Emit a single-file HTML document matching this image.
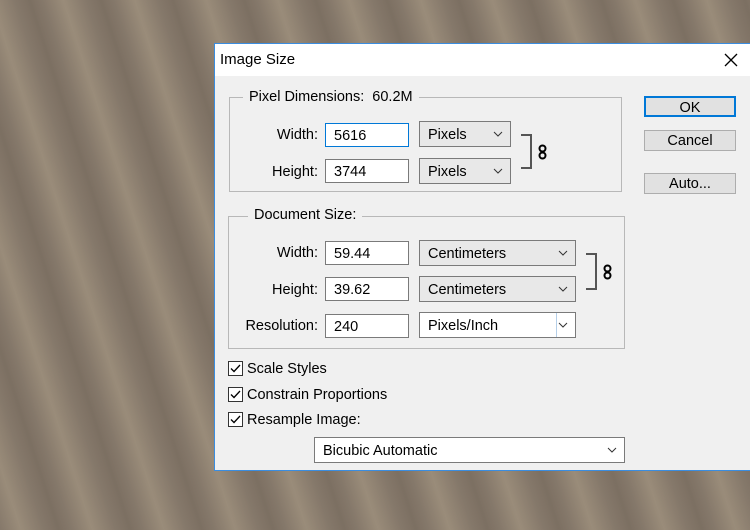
<!DOCTYPE html>
<html><head><style>
*{box-sizing:border-box;margin:0;padding:0}
body{width:750px;height:530px;overflow:hidden;position:relative;font-family:"Liberation Sans",sans-serif;font-size:14.5px;color:#000;
background:
repeating-linear-gradient(72deg,rgba(185,170,145,0) 0px,rgba(185,170,145,.4) 20px,rgba(185,170,145,0) 42px,rgba(60,50,40,.12) 56px,rgba(185,170,145,0) 68px),
#85786a;}
.a{position:absolute}
.dlg{left:214px;top:43px;width:540px;height:428px;background:#f0f0f0;border:1px solid #3a8de0;border-right:none}
.title{left:215px;top:44px;width:535px;height:32px;background:#fff}
.grp{border:1px solid #b8b8b8}
.leg{background:#f0f0f0;padding:0 6px}
.in{background:#fff;border:1px solid #7a7a7a;padding:4px 0 0 8px;height:24px}
.in.f{border:1px solid #0078d7}
.sel{background:#e8e8e8;border:1px solid #7a7a7a;padding:5px 0 0 8px;height:26px}
.sel svg{position:absolute;right:7px;top:9px}
.lab{text-align:right;width:110px}
.btn{background:#e1e1e1;border:1px solid #adadad;text-align:center;padding-top:2px;height:21px}
.cb{width:15px;height:15px;border:1px solid #333;background:#fff}
.br{border:2px solid #555;border-left:none;width:11px}
</style></head><body>
<div class="a dlg"></div>
<div class="a title"></div>
<div class="a" style="left:220px;top:51px;font-size:15px">Image Size</div>
<svg class="a" style="left:724px;top:53px" width="14" height="14"><path d="M1 1L13 13M13 1L1 13" stroke="#000" stroke-width="1.3"/></svg>

<div class="a grp" style="left:229px;top:97px;width:393px;height:95px"></div>
<div class="a leg" style="left:243px;top:89px">Pixel Dimensions:&nbsp; 60.2M</div>
<div class="a lab" style="left:208px;top:127px">Width:</div>
<div class="a in f" style="left:325px;top:123px;width:84px">5616</div>
<div class="a sel" style="left:419px;top:121px;width:92px">Pixels<svg width="10" height="6"><path d="M1 1L5 5L9 1" fill="none" stroke="#333"/></svg></div>
<div class="a lab" style="left:208px;top:164px">Height:</div>
<div class="a in" style="left:325px;top:159px;width:84px">3744</div>
<div class="a sel" style="left:419px;top:158px;width:92px">Pixels<svg width="10" height="6"><path d="M1 1L5 5L9 1" fill="none" stroke="#333"/></svg></div>
<div class="a br" style="left:521px;top:134px;height:35px"></div>
<svg class="a" style="left:538px;top:144px" width="9" height="16"><rect x="1.5" y="1.5" width="6" height="6" rx="3" fill="none" stroke="#000" stroke-width="2"/><rect x="1.5" y="8.5" width="6" height="6" rx="3" fill="none" stroke="#000" stroke-width="2"/></svg>

<div class="a btn" style="left:644px;top:96px;width:92px;border:2px solid #0078d7">OK</div>
<div class="a btn" style="left:644px;top:130px;width:92px">Cancel</div>
<div class="a btn" style="left:644px;top:173px;width:92px">Auto...</div>

<div class="a grp" style="left:228px;top:216px;width:397px;height:133px"></div>
<div class="a leg" style="left:248px;top:207px">Document Size:</div>
<div class="a lab" style="left:208px;top:245px">Width:</div>
<div class="a in" style="left:325px;top:241px;width:84px">59.44</div>
<div class="a sel" style="left:419px;top:240px;width:157px">Centimeters<svg width="10" height="6"><path d="M1 1L5 5L9 1" fill="none" stroke="#333"/></svg></div>
<div class="a lab" style="left:208px;top:282px">Height:</div>
<div class="a in" style="left:325px;top:277px;width:84px">39.62</div>
<div class="a sel" style="left:419px;top:276px;width:157px">Centimeters<svg width="10" height="6"><path d="M1 1L5 5L9 1" fill="none" stroke="#333"/></svg></div>
<div class="a lab" style="left:208px;top:318px">Resolution:</div>
<div class="a in" style="left:325px;top:314px;width:84px">240</div>
<div class="a sel" style="left:419px;top:312px;width:157px;background:#fff">Pixels/Inch<svg width="10" height="6"><path d="M1 1L5 5L9 1" fill="none" stroke="#333"/></svg></div>
<div class="a" style="left:556px;top:313px;width:1px;height:24px;background:#b5cfe8"></div>
<div class="a br" style="left:586px;top:253px;height:37px"></div>
<svg class="a" style="left:603px;top:264px" width="9" height="16"><rect x="1.5" y="1.5" width="6" height="6" rx="3" fill="none" stroke="#000" stroke-width="2"/><rect x="1.5" y="8.5" width="6" height="6" rx="3" fill="none" stroke="#000" stroke-width="2"/></svg>

<div class="a cb" style="left:228px;top:361px"><svg width="13" height="13"><path d="M2 6.5L5 9.5L11 3" fill="none" stroke="#000" stroke-width="1.3"/></svg></div>
<div class="a" style="left:247px;top:361px">Scale Styles</div>
<div class="a cb" style="left:228px;top:387px"><svg width="13" height="13"><path d="M2 6.5L5 9.5L11 3" fill="none" stroke="#000" stroke-width="1.3"/></svg></div>
<div class="a" style="left:247px;top:387px">Constrain Proportions</div>
<div class="a cb" style="left:228px;top:412px"><svg width="13" height="13"><path d="M2 6.5L5 9.5L11 3" fill="none" stroke="#000" stroke-width="1.3"/></svg></div>
<div class="a" style="left:247px;top:412px">Resample Image:</div>
<div class="a sel" style="left:314px;top:437px;width:311px;background:#fff">Bicubic Automatic<svg width="10" height="6"><path d="M1 1L5 5L9 1" fill="none" stroke="#333"/></svg></div>
</body></html>
